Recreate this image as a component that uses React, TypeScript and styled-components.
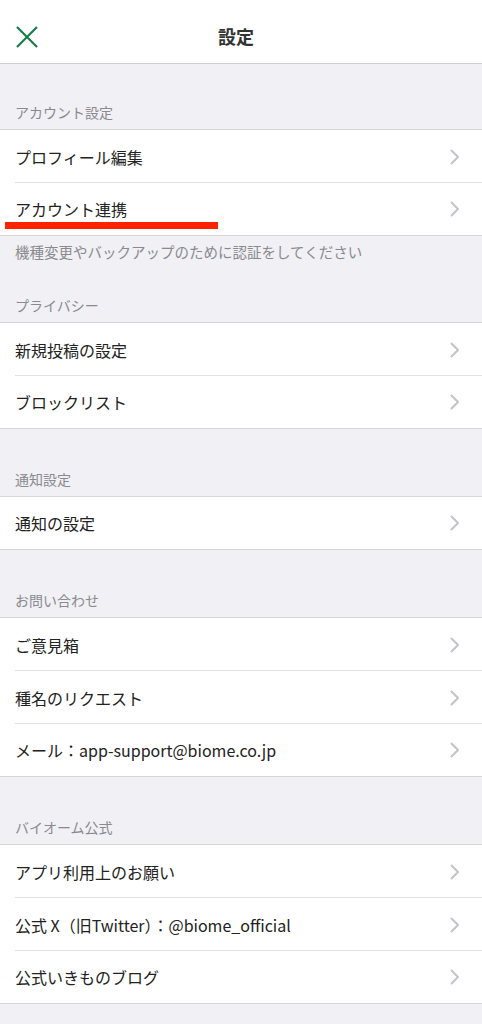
import React from 'react';
import styled, { createGlobalStyle } from 'styled-components';

const GlobalStyle = createGlobalStyle`
	html, body {
		margin: 0;
		padding: 0;
		background: #f0f0f5;
	}
	body {
		font-family: 'Noto Sans CJK JP', 'Noto Sans', 'Liberation Sans', sans-serif;
		-webkit-font-smoothing: antialiased;
	}
`;

const Screen = styled.div`
	width: 482px;
	min-height: 1024px;
	background: #f0f0f5;
`;

const Header = styled.header`
	height: 63px;
	background: #ffffff;
	border-bottom: 1px solid #cfcfd3;
	display: grid;
	grid-template-columns: 64px 1fr 74px;
	align-items: center;
`;

const CloseButton = styled.button`
	border: none;
	background: none;
	padding: 0 0 0 15px;
	margin-top: 10px;
	display: flex;
	align-items: center;
	cursor: pointer;
`;

const Title = styled.h1`
	margin: 9px 0 0;
	text-align: center;
	font-size: 18px;
	font-weight: 700;
	color: #333333;
`;

const SectionHeader = styled.div<{ $top: number }>`
	padding: ${(p) => p.$top}px 15px 7px;
	font-size: 14px;
	line-height: 20px;
	color: #8a8a8e;
`;

const Footer = styled.div`
	padding: 6px 15px 0;
	font-size: 14.5px;
	line-height: 20px;
	color: #8a8a8e;
`;

const Group = styled.ul`
	list-style: none;
	margin: 0;
	padding: 0;
	background: #ffffff;
	border-top: 1px solid #d6d6da;
`;

const Row = styled.li`
	position: relative;
	height: 53px;
	display: flex;
	align-items: center;
	justify-content: space-between;
	padding: 0 22px 0 15px;
	box-sizing: border-box;
	border-bottom: 1px solid #d6d6da;

	&:not(:last-child) {
		border-bottom: none;
	}
	&:not(:last-child)::after {
		content: '';
		position: absolute;
		bottom: 0;
		left: 15px;
		right: 0;
		height: 1px;
		background: #e2e2e5;
	}
`;

const Label = styled.span`
	font-size: 16px;
	color: #222222;
`;

const Marker = styled.span`
	position: absolute;
	left: 5px;
	top: 39px;
	width: 213px;
	height: 7px;
	background: #ff2200;
`;

const Chevron = () => (
	<svg width="10" height="16" viewBox="0 0 10 16" fill="none">
		<path d="M1.5 1.5L8 8L1.5 14.5" stroke="#c4c4c8" strokeWidth="2" strokeLinecap="round" strokeLinejoin="round" />
	</svg>
);

const CloseIcon = () => (
	<svg width="24" height="22" viewBox="0 0 24 22" fill="none">
		<path d="M2 1L22 21M22 1L2 21" stroke="#1c7a4a" strokeWidth="2.2" />
	</svg>
);

type Section = {
	title: string;
	top: number;
	items: string[];
	footer?: string;
	marked?: number;
};

const sections: Section[] = [
	{
		title: 'アカウント設定',
		top: 38,
		items: ['プロフィール編集', 'アカウント連携'],
		footer: '機種変更やバックアップのために認証をしてください',
		marked: 1,
	},
	{ title: 'プライバシー', top: 33, items: ['新規投稿の設定', 'ブロックリスト'] },
	{ title: '通知設定', top: 40, items: ['通知の設定'] },
	{
		title: 'お問い合わせ',
		top: 40,
		items: ['ご意見箱', '種名のリクエスト', 'メール：app-support@biome.co.jp'],
	},
	{
		title: 'バイオーム公式',
		top: 40,
		items: ['アプリ利用上のお願い', '公式 X（旧Twitter）：@biome_official', '公式いきものブログ'],
	},
];

export default function App() {
	return (
		<Screen>
			<GlobalStyle />
			<Header>
				<CloseButton aria-label="閉じる">
					<CloseIcon />
				</CloseButton>
				<Title>設定</Title>
				<span />
			</Header>
			{sections.map((s) => (
				<section key={s.title}>
					<SectionHeader $top={s.top}>{s.title}</SectionHeader>
					<Group>
						{s.items.map((item, i) => (
							<Row key={item}>
								<Label>{item}</Label>
								<Chevron />
								{s.marked === i && <Marker />}
							</Row>
						))}
					</Group>
					{s.footer && <Footer>{s.footer}</Footer>}
				</section>
			))}
		</Screen>
	);
}
